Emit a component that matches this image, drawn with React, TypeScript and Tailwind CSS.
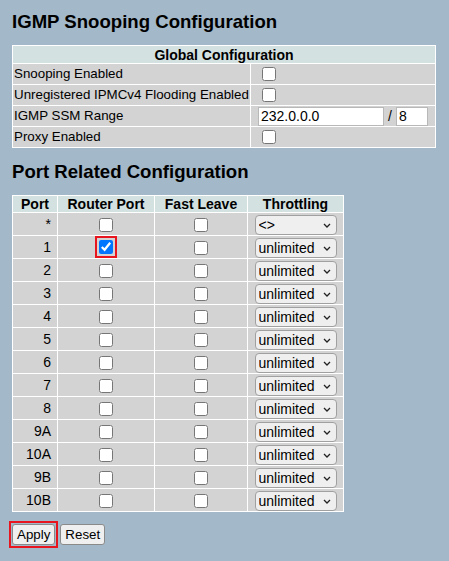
import React from "react";

const ports = ["1", "2", "3", "4", "5", "6", "7", "8", "9A", "10A", "9B", "10B"];

function Checkbox({ checked = false }: { checked?: boolean }) {
  return (
    <input
      type="checkbox"
      defaultChecked={checked}
      className="m-0 h-[14px] w-[14px] align-middle"
    />
  );
}

function Throttle({ value }: { value: string }) {
  return (
    <span className="relative inline-block align-middle">
      <select
        defaultValue={value}
        className="block h-[20px] w-[82px] appearance-none rounded-[4px] border border-[#a0a0a0] bg-[#efefef] pl-[3px] text-[14px] leading-[18px] text-black"
      >
        <option value="<>">&lt;&gt;</option>
        <option value="unlimited">unlimited</option>
      </select>
      <svg
        className="pointer-events-none absolute right-[6px] top-[8px]"
        width="8"
        height="5"
        viewBox="0 0 8 5"
        fill="none"
      >
        <path d="M1 1l3 3 3-3" stroke="#222" strokeWidth="1.3" />
      </svg>
    </span>
  );
}

export default function App() {
  return (
    <div
      className="min-h-screen bg-[#a3b8c8] px-3 pt-[10px] text-[13.33px] text-black"
      style={{ fontFamily: '"Liberation Sans", Arial, sans-serif' }}
    >
      {/* Title */}
      <h1 className="mb-[11px] text-[18.6px] font-bold leading-[24px]">IGMP Snooping Configuration</h1>

      {/* Global table */}
      <table className="w-[424px] border-collapse border border-white">
        <thead>
          <tr className="h-[18px]">
            <th
              colSpan={2}
              className="border border-white bg-[#d4e1e1] p-0 text-[14px] font-bold leading-[16px]"
            >
              Global Configuration
            </th>
          </tr>
        </thead>
        <tbody className="bg-[#d3d3d3] leading-[16px]">
          <tr className="h-[21px]">
            <td className="w-[238px] border border-white px-[1px] py-0">Snooping Enabled</td>
            <td className="border border-white py-0 pl-[11px]">
              <Checkbox />
            </td>
          </tr>
          <tr className="h-[21px]">
            <td className="border border-white px-[1px] py-0 whitespace-nowrap">
              Unregistered IPMCv4 Flooding Enabled
            </td>
            <td className="border border-white py-0 pl-[11px]">
              <Checkbox />
            </td>
          </tr>
          <tr className="h-[21px]">
            <td className="border border-white px-[1px] py-0">IGMP SSM Range</td>
            <td className="border border-white py-0 pl-[7px]">
              <div className="flex items-center">
                <input
                  type="text"
                  defaultValue="232.0.0.0"
                  className="h-[19px] w-[126px] border border-[#b8b8b8] bg-white px-[2px] text-[14px]"
                />
                <span className="px-[4px] text-[14px]">/</span>
                <input
                  type="text"
                  defaultValue="8"
                  className="h-[19px] w-[32px] border border-[#b8b8b8] bg-white px-[2px] text-[14px]"
                />
              </div>
            </td>
          </tr>
          <tr className="h-[21px]">
            <td className="border border-white px-[1px] py-0">Proxy Enabled</td>
            <td className="border border-white py-0 pl-[11px]">
              <Checkbox />
            </td>
          </tr>
        </tbody>
      </table>

      <h2 className="mt-[12px] mb-[11px] text-[18.6px] font-bold leading-[24px]">Port Related Configuration</h2>

      {/* Port table */}
      <table className="w-[332px] border-collapse border border-white">
        <thead>
          <tr className="h-[17px] bg-[#d4e1e1] text-[14px] font-bold leading-[15px]">
            <th className="w-[45px] border border-white p-0">Port</th>
            <th className="w-[97px] border border-white p-0">Router Port</th>
            <th className="w-[93px] border border-white p-0">Fast Leave</th>
            <th className="border border-white p-0">Throttling</th>
          </tr>
        </thead>
        <tbody className="bg-[#d3d3d3] text-[14px]">
          <tr className="h-[23px]">
            <td className="border border-white py-0 pr-[6px] text-right">*</td>
            <td className="border border-white p-0 text-center">
              <Checkbox />
            </td>
            <td className="border border-white p-0 text-center">
              <Checkbox />
            </td>
            <td className="border border-white p-0 text-center">
              <Throttle value="<>" />
            </td>
          </tr>
          {ports.map((p) => (
            <tr key={p} className="h-[23px]">
              <td className="border border-white py-0 pr-[6px] text-right">{p}</td>
              <td className="border border-white p-0 text-center">
                {p === "1" ? (
                  <span className="inline-flex h-[22px] w-[22px] items-center justify-center border-2 border-[#e8141e] align-middle">
                    <Checkbox checked />
                  </span>
                ) : (
                  <Checkbox />
                )}
              </td>
              <td className="border border-white p-0 text-center">
                <Checkbox />
              </td>
              <td className="border border-white p-0 text-center">
                <Throttle value="unlimited" />
              </td>
            </tr>
          ))}
        </tbody>
      </table>

      {/* Buttons */}
      <div className="ml-[-3px] mt-[9px] flex items-center gap-[2px]">
        <span className="inline-flex border-2 border-[#e8141e] p-[1px]">
          <button className="h-[21px] rounded-[3px] border border-[#8a8a8a] bg-[#efefef] px-[4px] text-[13.33px]">
            Apply
          </button>
        </span>
        <button className="h-[21px] rounded-[3px] border border-[#8a8a8a] bg-[#efefef] px-[4px] text-[13.33px]">
          Reset
        </button>
      </div>
    </div>
  );
}
